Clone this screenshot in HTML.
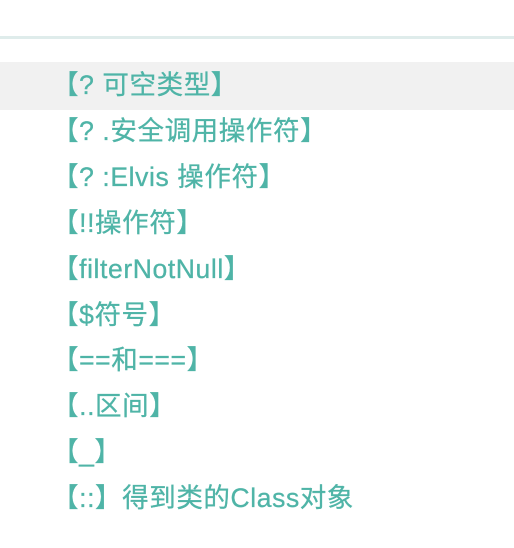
<!DOCTYPE html>
<html><head><meta charset="utf-8"><style>
body{margin:0;width:514px;height:548px;background:#fff;overflow:hidden;font-family:"Liberation Sans","Noto Sans CJK SC",sans-serif;}
.line{position:absolute;top:36px;left:0;width:514px;height:3px;background:#dfeceb;}
.row{position:absolute;left:0;width:514px;height:46px;line-height:46px;padding-left:52px;box-sizing:border-box;color:#4fb4a7;font-size:26.5px;white-space:nowrap;letter-spacing:0.6px;-webkit-text-stroke:0.3px #4fb4a7;}
.hl{background:#f1f1f1;height:48px;}
</style></head><body>
<div class="line"></div>
<div class="row hl" style="top:62px">【? 可空类型】</div>
<div class="row" style="top:108px">【? .安全调用操作符】</div>
<div class="row" style="top:154px">【? :Elvis 操作符】</div>
<div class="row" style="top:200px">【!!操作符】</div>
<div class="row" style="top:246px">【filterNotNull】</div>
<div class="row" style="top:292px">【$符号】</div>
<div class="row" style="top:337px">【==和===】</div>
<div class="row" style="top:383px">【..区间】</div>
<div class="row" style="top:429px">【_】</div>
<div class="row" style="top:475px">【::】得到类的Class对象</div>
</body></html>
